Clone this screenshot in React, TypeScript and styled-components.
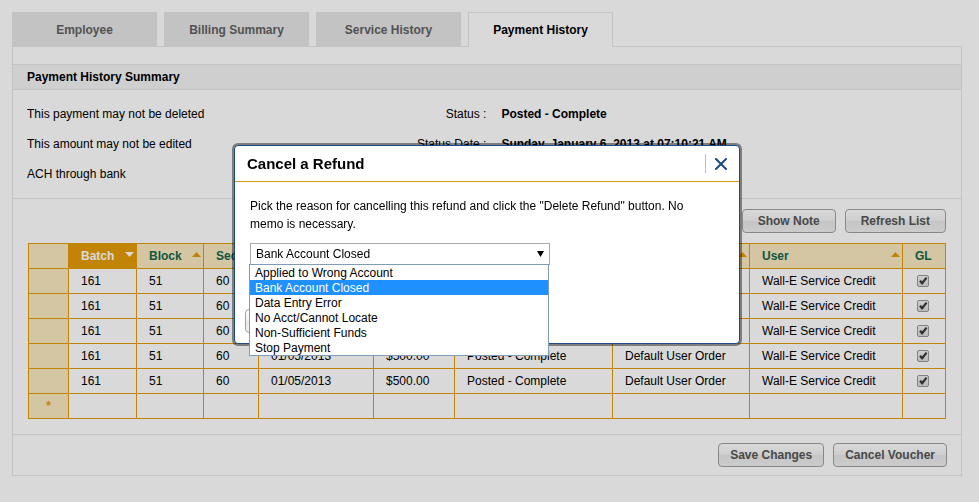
import React, { useState } from "react";
import styled, { createGlobalStyle, css } from "styled-components";

const GlobalStyle = createGlobalStyle`
  *, *::before, *::after { box-sizing: border-box; }
  body {
    margin: 0;
    background: #fff;
    color: #000;
    font: 12px/18px "Liberation Sans", Arial, sans-serif;
  }
  button, select, input { font: inherit; }
`;

const Page = styled.main`
  padding: 12px 17px 12px 12px;
`;

const TabBar = styled.nav`
  display: flex;
  gap: 7px;
`;

const Tab = styled.button<{ $active?: boolean }>`
  width: 145px;
  height: 34px;
  padding: 0;
  border: 1px solid #e6e6e6;
  border-bottom: 0;
  background: #e6e6e6;
  color: #616161;
  font-weight: bold;
  ${(p) =>
    p.$active &&
    css`
      z-index: 1;
      height: 35px;
      margin-bottom: -1px;
      background: #fff;
      color: #000;
    `}
`;

const Panel = styled.div`
  border: 1px solid #e6e6e6;
  padding-top: 17px;
`;

const SectionTitle = styled.h2`
  margin: 0;
  padding: 3px 14px;
  border: solid #e6e6e6;
  border-width: 1px 0;
  background: #f4f4f4;
  font-size: 12px;
  line-height: 18px;
`;

const Summary = styled.div`
  display: grid;
  grid-template-columns: 1fr 1fr;
  padding: 9px 14px;
  border-bottom: 1px solid #e6e6e6;
  line-height: 30px;
`;

const Notes = styled.div`
  p {
    margin: 0;
  }
`;

const Facts = styled.dl`
  display: grid;
  grid-template-columns: max-content 1fr;
  grid-auto-rows: 30px;
  column-gap: 15px;
  margin: 0 0 0 -70px;
  dt {
    text-align: right;
  }
  dd {
    margin: 0;
    font-weight: bold;
  }
`;

const ButtonRow = styled.div<{ $footer?: boolean }>`
  display: flex;
  justify-content: flex-end;
  gap: 9px;
  padding: ${(p) => (p.$footer ? "8px 14px" : "10px 15px")};
  ${(p) => p.$footer && "border-top: 1px solid #e6e6e6;"}
`;

const Button = styled.button<{ $wide?: boolean }>`
  height: 24px;
  padding: 0 ${(p) => (p.$wide ? 15 : 11)}px;
  border: 1px solid #a0a0a0;
  border-radius: 4px;
  background: linear-gradient(#fff 0%, #f3f3f3 48%, #e8e8e8 52%, #f0f0f0 100%);
  color: #555;
  font-weight: bold;
  white-space: nowrap;
`;

const TableArea = styled.div`
  padding: 0 15px 15px;
`;

const Grid = styled.table`
  width: 100%;
  table-layout: fixed;
  border-collapse: collapse;
`;

const HeadCell = styled.th<{ $active?: boolean }>`
  height: 25px;
  padding: 0 2px 0 12px;
  border: 1px solid #e39c08;
  background: ${(p) => (p.$active ? "#e39c08" : "#fae8c0")};
  color: ${(p) => (p.$active ? "#fff" : "#11674d")};
  text-align: left;
`;

const HeadContent = styled.div`
  display: flex;
  align-items: center;
  justify-content: space-between;
  height: 24px;
  svg {
    margin-bottom: 3px;
  }
`;

const Cell = styled.td<{ $center?: boolean }>`
  height: 25px;
  padding: 0 ${(p) => (p.$center ? 0 : 12)}px;
  border: 1px solid #e39c08;
  line-height: ${(p) => (p.$center ? 16 : 18)}px;
  text-align: ${(p) => (p.$center ? "center" : "left")};
  white-space: nowrap;
`;

const Marker = styled.td`
  height: 25px;
  padding: 0;
  border: 1px solid #e39c08;
  background: #fae8c0;
  color: #e39c08;
  font-weight: bold;
  text-align: center;
`;

const CheckWrap = styled.label`
  display: grid;
  justify-content: center;
  padding-right: 2px;
  input,
  svg {
    grid-area: 1 / 1;
  }
  svg {
    pointer-events: none;
  }
`;

const CheckInput = styled.input`
  appearance: none;
  width: 12px;
  height: 12px;
  margin: 0;
  border: 1px solid #999;
  border-radius: 2px;
  background: linear-gradient(#f2f2f2, #dcdcdc);
  & + svg {
    visibility: hidden;
  }
  &:checked + svg {
    visibility: visible;
  }
`;

const Overlay = styled.div`
  position: fixed;
  inset: 0;
  z-index: 10;
  display: flex;
  align-items: flex-start;
  justify-content: center;
  padding: 145px 17px 0 12px;
  background: rgba(0, 0, 0, 0.15);
`;

const Dialog = styled.section`
  width: 506px;
  border: 1px solid #1c4a86;
  border-radius: 4px;
  background: #fff;
  box-shadow: 0 0 0 2px rgba(0, 0, 0, 0.42);
`;

const DialogHeader = styled.header`
  display: flex;
  align-items: center;
  justify-content: space-between;
  height: 36px;
  padding: 0 6px 0 12px;
  border-bottom: 1px solid #d99c18;
`;

const DialogTitle = styled.h1`
  margin: 0;
  font-size: 15px;
`;

const CloseButton = styled.button`
  display: grid;
  place-items: center;
  width: 28px;
  height: 19px;
  padding: 0 0 0 2px;
  border: 0;
  border-left: 1px solid #a9c1dc;
  background: none;
`;

const DialogBody = styled.div`
  padding: 15px 40px 0 15px;
  p {
    margin: 0 0 10px;
  }
`;

const DialogFooter = styled.footer`
  padding: 44px 10px 10px;
`;

const Picker = styled.div`
  position: relative;
  width: 300px;
`;

const SelectBox = styled.select`
  appearance: none;
  display: block;
  width: 100%;
  height: 22px;
  padding: 0 20px 0 5px;
  border: 1px solid #a9a9a9;
  border-radius: 0;
  background: #fff;
  color: #000;
`;

const SelectArrow = styled.svg`
  position: absolute;
  top: 8px;
  right: 6px;
  pointer-events: none;
`;

const OptionList = styled.ul`
  position: absolute;
  top: 21px;
  left: -1px;
  width: 100%;
  margin: 0;
  padding: 0;
  border: 1px solid #7f9db9;
  background: #fff;
  list-style: none;
  line-height: 13px;
`;

const OptionItem = styled.li<{ $selected: boolean }>`
  padding: 2px 5px 0;
  background: ${(p) => (p.$selected ? "#1e90ff" : "#fff")};
  color: ${(p) => (p.$selected ? "#fff" : "#000")};
`;

const SortArrow = ({ down }: { down?: boolean }) => (
  <svg width="9" height="5" viewBox="0 0 9 5" aria-hidden="true">
    <path d={down ? "M0 0h9L4.5 5z" : "M0 5h9L4.5 0z"} fill={down ? "#fff" : "#e39c08"} />
  </svg>
);

const Check = ({ row }: { row: number }) => (
  <CheckWrap>
    <CheckInput type="checkbox" defaultChecked aria-label={`GL, row ${row}`} />
    <svg width="12" height="12" viewBox="0 0 12 12" aria-hidden="true">
      <path d="M2.2 6.4l1.6-1.5 1.4 1.4L8.8 2l1.6 1.3-4.7 6.2H4.5z" fill="#3c3c3c" />
    </svg>
  </CheckWrap>
);

const tabs = ["Employee", "Billing Summary", "Service History", "Payment History"];

const columns = [
  { name: "Batch", width: 68 },
  { name: "Block", width: 67 },
  { name: "Seq", width: 55 },
  { name: "Date", width: 115 },
  { name: "Amount", width: 81 },
  { name: "Status", width: 158 },
  { name: "Order", width: 137 },
  { name: "User", width: 153 },
  { name: "GL", width: 43 },
];

const payment = ["161", "51", "60", "01/05/2013", "$500.00", "Posted - Complete", "Default User Order", "Wall-E Service Credit"];
const payments = Array.from({ length: 5 }, () => payment);

const reasons = [
  "Applied to Wrong Account",
  "Bank Account Closed",
  "Data Entry Error",
  "No Acct/Cannot Locate",
  "Non-Sufficient Funds",
  "Stop Payment",
];

export default function App() {
  const [tab, setTab] = useState("Payment History");
  const [reason, setReason] = useState("Bank Account Closed");

  return (
    <>
      <GlobalStyle />
      <Page>
        <TabBar>
          {tabs.map((name) => (
            <Tab key={name} type="button" $active={name === tab} onClick={() => setTab(name)}>
              {name}
            </Tab>
          ))}
        </TabBar>
        <Panel>
          <SectionTitle>Payment History Summary</SectionTitle>
          <Summary>
            <Notes>
              <p>This payment may not be deleted</p>
              <p>This amount may not be edited</p>
              <p>ACH through bank</p>
            </Notes>
            <Facts>
              <dt>Status :</dt>
              <dd>Posted - Complete</dd>
              <dt>Status Date :</dt>
              <dd>Sunday, January 6, 2013 at 07:10:21 AM</dd>
            </Facts>
          </Summary>
          <ButtonRow>
            <Button type="button" $wide>Show Note</Button>
            <Button type="button" $wide>Refresh List</Button>
          </ButtonRow>
          <TableArea>
            <Grid>
              <colgroup>
                <col width={40} />
                {columns.map((c) => (
                  <col key={c.name} width={c.width} />
                ))}
              </colgroup>
              <thead>
                <tr>
                  <HeadCell aria-label="Row" />
                  {columns.map((c) => (
                    <HeadCell key={c.name} scope="col" $active={c.name === "Batch"}>
                      <HeadContent>
                        {c.name}
                        {c.name !== "GL" && <SortArrow down={c.name === "Batch"} />}
                      </HeadContent>
                    </HeadCell>
                  ))}
                </tr>
              </thead>
              <tbody>
                {payments.map((cells, row) => (
                  <tr key={row}>
                    <Marker />
                    {cells.map((text) => (
                      <Cell key={text}>{text}</Cell>
                    ))}
                    <Cell $center>
                      <Check row={row + 1} />
                    </Cell>
                  </tr>
                ))}
                <tr>
                  <Marker>*</Marker>
                  {columns.map((c) => (
                    <Cell key={c.name} />
                  ))}
                </tr>
              </tbody>
            </Grid>
          </TableArea>
          <ButtonRow $footer>
            <Button type="button">Save Changes</Button>
            <Button type="button">Cancel Voucher</Button>
          </ButtonRow>
        </Panel>
      </Page>

      <Overlay>
        <Dialog role="dialog" aria-modal="true" aria-labelledby="dialog-title">
          <DialogHeader>
            <DialogTitle id="dialog-title">Cancel a Refund</DialogTitle>
            <CloseButton type="button" aria-label="Close">
              <svg width="12" height="12" viewBox="0 0 12 12" aria-hidden="true">
                <path d="M1 1l10 10M11 1L1 11" stroke="#1c4a86" strokeWidth="2" strokeLinecap="square" />
              </svg>
            </CloseButton>
          </DialogHeader>
          <DialogBody>
            <p id="reason-help">
              Pick the reason for cancelling this refund and click the "Delete Refund" button. No memo is necessary.
            </p>
            <Picker>
              <SelectBox aria-labelledby="reason-help" value={reason} onChange={(e) => setReason(e.target.value)}>
                {reasons.map((r) => (
                  <option key={r}>{r}</option>
                ))}
              </SelectBox>
              <SelectArrow width="7" height="6" viewBox="0 0 7 6" aria-hidden="true">
                <path d="M0 0h7L3.5 6z" fill="#000" />
              </SelectArrow>
              <OptionList role="listbox" aria-labelledby="reason-help">
                {reasons.map((r) => (
                  <OptionItem key={r} role="option" aria-selected={r === reason} $selected={r === reason} onClick={() => setReason(r)}>
                    {r}
                  </OptionItem>
                ))}
              </OptionList>
            </Picker>
          </DialogBody>
          <DialogFooter>
            <Button type="button">Delete Refund</Button>
          </DialogFooter>
        </Dialog>
      </Overlay>
    </>
  );
}
